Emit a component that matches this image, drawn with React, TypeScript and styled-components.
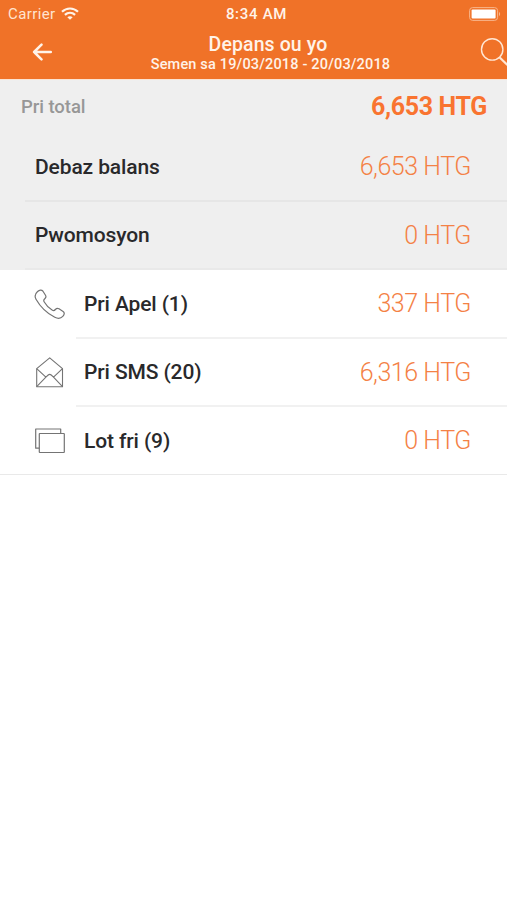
import React from "react";
import styled, { createGlobalStyle } from "styled-components";

const GlobalStyle = createGlobalStyle`
  * { box-sizing: border-box; }
  body { margin: 0; background: #fff; font-family: Roboto, "Liberation Sans", sans-serif; }
`;

const Screen = styled.main`
  display: flex;
  flex-direction: column;
  width: 507px;
  height: 900px;
  overflow: hidden;
  background: #fff;
`;

const Header = styled.header`
  height: 80px;
  background: #f07228;
  border-bottom: 1px solid #fbe3d3;
  color: #fff3e8;
`;

const StatusBar = styled.div`
  display: grid;
  grid-template-columns: 1fr auto 1fr;
  align-items: center;
  height: 28px;
  padding: 0 6px 0 8px;
`;

const Carrier = styled.div`
  display: flex;
  align-items: center;
  gap: 5px;
  font-size: 15px;
  line-height: 18px;
  letter-spacing: 0.4px;
  color: #ffe4d0;
`;

const Clock = styled.div`
  padding-left: 4px;
  font-size: 15px;
  line-height: 18px;
  font-weight: 500;
  letter-spacing: 0.7px;
`;

const BatterySlot = styled.div`
  display: flex;
  justify-content: flex-end;
  padding-bottom: 1px;
`;

const NavBar = styled.div`
  display: grid;
  grid-template-columns: 120px 1fr 120px;
  height: 51px;
`;

const NavButton = styled.button<{ $side: "left" | "right" }>`
  display: flex;
  align-items: center;
  justify-content: ${(p) => (p.$side === "left" ? "flex-start" : "flex-end")};
  padding: ${(p) => (p.$side === "left" ? "0 0 4px 32px" : "0 0 4px")};
  border: 0;
  background: none;
  color: inherit;
`;

const Titles = styled.div`
  display: flex;
  flex-direction: column;
  align-items: center;
  padding: 6px 0 0 18px;
  margin-right: -11px;
  white-space: nowrap;
`;

const Title = styled.h1`
  margin: 0;
  font-size: 19.5px;
  line-height: 22px;
  font-weight: 500;
  letter-spacing: 0.1px;
`;

const Subtitle = styled.div`
  margin-left: 5px;
  font-size: 14.5px;
  line-height: 17px;
  font-weight: 500;
  letter-spacing: 0.17px;
`;

const Summary = styled.section`
  height: 190px;
  background: #efefef;
`;

const TotalRow = styled.div`
  display: flex;
  align-items: center;
  justify-content: space-between;
  height: 53px;
  padding: 0 20px 0 21px;
`;

const TotalLabel = styled.span`
  font-size: 18.5px;
  font-weight: 500;
  letter-spacing: -0.05px;
  color: #979797;
`;

const TotalValue = styled.span`
  font-size: 25px;
  font-weight: 700;
  letter-spacing: -0.35px;
  color: #f97430;
`;

const Row = styled.div<{ $inset: number; $height: number; $line: string }>`
  display: flex;
  align-items: center;
  justify-content: space-between;
  height: ${(p) => p.$height}px;
  margin-left: ${(p) => p.$inset}px;
  padding: 0 36px 0 10px;
  border-bottom: 2px solid ${(p) => p.$line};
`;

const Details = styled.section`
  border-bottom: 1px solid #e9e9e9;
`;

const DetailItem = styled.div`
  display: grid;
  grid-template-columns: 76px 1fr;
`;

const IconSlot = styled.div`
  display: flex;
  align-items: center;
  padding-left: 33px;
`;

const DetailRow = styled.div<{ $height: number; $last: boolean }>`
  display: flex;
  align-items: center;
  justify-content: space-between;
  height: ${(p) => p.$height}px;
  padding: 0 36px 0 8px;
  border-bottom: ${(p) => (p.$last ? "0" : "2px solid #f1f1f1")};
`;

const Label = styled.span`
  font-size: 21px;
  font-weight: 500;
  letter-spacing: -0.12px;
  color: #29292b;
`;

const Value = styled.span`
  font-size: 25px;
  font-weight: 300;
  letter-spacing: -0.45px;
  color: #f48145;
`;

const WifiIcon = () => (
  <svg width="18" height="14" viewBox="0 0 18 14" fill="none" stroke="#fff3e8" strokeWidth="2.2">
    <path d="M1 4.7C5.6.4 12.4.4 17 4.7" />
    <path d="M3.9 7.9c3-2.7 7.2-2.7 10.2 0" />
    <path d="M6.3 10.2c1.6-1.4 3.8-1.4 5.4 0L9 12.8z" fill="#fff3e8" stroke="none" />
  </svg>
);

const BatteryIcon = () => (
  <svg width="32" height="14" viewBox="0 0 32 14">
    <rect x=".6" y=".6" width="28" height="12.8" rx="3" fill="none" stroke="#f8b68c" />
    <rect x="2.6" y="2.6" width="24" height="8.8" rx="1" fill="#fff" />
    <path d="M30 5c1.5.7 1.5 3.3 0 4z" fill="#f8b68c" />
  </svg>
);

const BackIcon = () => (
  <svg width="21" height="18" viewBox="0 0 21 18" fill="none" stroke="#fff3e8" strokeWidth="2.5" strokeLinecap="round" strokeLinejoin="round">
    <path d="M9.5 1.7 2.1 9l7.4 7.3M2.1 9h16.7" />
  </svg>
);

const SearchIcon = () => (
  <svg width="27" height="30" viewBox="0 0 27 30" fill="none" stroke="#ffe6d3">
    <circle cx="12.2" cy="12.4" r="10.7" strokeWidth="1.4" />
    <path d="m19.4 20.2 8 7.8" strokeWidth="2.2" />
  </svg>
);

const PhoneIcon = () => (
  <svg width="34" height="34" viewBox="0 0 34 34" fill="none" stroke="#747474" strokeWidth="1.2" strokeLinejoin="round">
    <path d="M4.6 3.5C6.4 1.9 8.5 1.5 9.8 3l2.7 4.2c.8 1.3.5 2.5-.7 3.5-1.3 1.1-1.5 1.6-.7 3 2.1 3.7 4.7 6.4 8.3 8.5 1.3.8 2 .5 3-.7 1.1-1.3 2.2-1.5 3.6-.7l4.1 2.6c1.7 1.2 1.4 3.2-.3 5-2 2.2-4.8 2.5-8 .9C13.9 25.2 7.2 18.5 3 11.2 1.4 8.3 2.2 5.6 4.6 3.5Z" />
  </svg>
);

const MailIcon = () => (
  <svg width="34" height="34" viewBox="0 0 34 34" fill="none" stroke="#747474" strokeWidth="1.1" strokeLinejoin="round">
    <path d="M3.7 12.7 16.7 1.8l12.8 10.9v18H3.7z" />
    <path d="m3.7 12.7 9.2 8.5m16.6-8.5-9 8.5M3.7 30.7l9.2-9.5 2.3-2.2c.9-.8 2.1-.8 3 0l2.3 2.2 9 9.5" />
  </svg>
);

const CardsIcon = () => (
  <svg width="34" height="34" viewBox="0 0 34 34" fill="none" stroke="#747474" strokeWidth="1.2" strokeLinejoin="round">
    <path d="M6.3 24.2H2.7V5h25v4.5" />
    <rect x="6.3" y="9.5" width="25" height="19" rx=".5" />
  </svg>
);

const details = [
  { label: "Pri Apel (1)", value: "337 HTG", icon: <PhoneIcon />, height: 69 },
  { label: "Pri SMS (20)", value: "6,316 HTG", icon: <MailIcon />, height: 68 },
  { label: "Lot fri (9)", value: "0 HTG", icon: <CardsIcon />, height: 67 },
];

export default function App() {
  return (
    <>
      <GlobalStyle />
      <Screen>
        <Header>
          <StatusBar>
            <Carrier>
              Carrier
              <WifiIcon />
            </Carrier>
            <Clock>8:34 AM</Clock>
            <BatterySlot>
              <BatteryIcon />
            </BatterySlot>
          </StatusBar>
          <NavBar>
            <NavButton $side="left" aria-label="Retounen">
              <BackIcon />
            </NavButton>
            <Titles>
              <Title>Depans ou yo</Title>
              <Subtitle>Semen sa 19/03/2018 - 20/03/2018</Subtitle>
            </Titles>
            <NavButton $side="right" aria-label="Chèche">
              <SearchIcon />
            </NavButton>
          </NavBar>
        </Header>
        <Summary>
          <TotalRow>
            <TotalLabel>Pri total</TotalLabel>
            <TotalValue>6,653 HTG</TotalValue>
          </TotalRow>
          <Row $inset={25} $height={69} $line="#e6e6e6">
            <Label>Debaz balans</Label>
            <Value>6,653 HTG</Value>
          </Row>
          <Row $inset={25} $height={68} $line="#e9e9e9">
            <Label>Pwomosyon</Label>
            <Value>0 HTG</Value>
          </Row>
        </Summary>
        <Details>
          {details.map((item, i) => (
            <DetailItem key={item.label}>
              <IconSlot>{item.icon}</IconSlot>
              <DetailRow $height={item.height} $last={i === details.length - 1}>
                <Label>{item.label}</Label>
                <Value>{item.value}</Value>
              </DetailRow>
            </DetailItem>
          ))}
        </Details>
      </Screen>
    </>
  );
}
